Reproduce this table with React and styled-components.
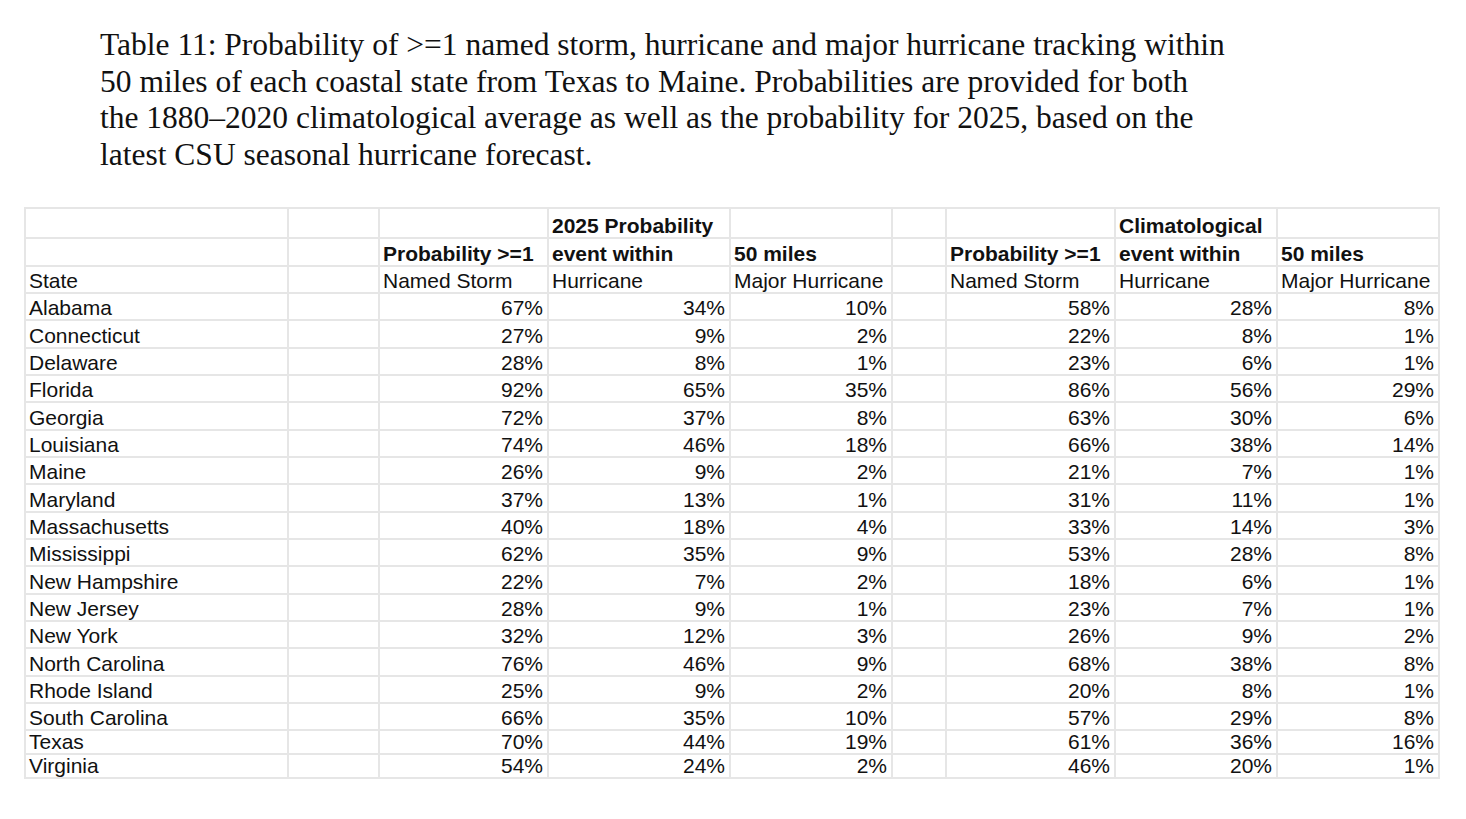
import React from 'react'
import styled, { createGlobalStyle } from 'styled-components'

const GlobalStyle = createGlobalStyle`
  html, body {
    margin: 0;
    padding: 0;
    background: #ffffff;
  }
`

const rows = [
  ['Alabama', '67%', '34%', '10%', '58%', '28%', '8%'],
  ['Connecticut', '27%', '9%', '2%', '22%', '8%', '1%'],
  ['Delaware', '28%', '8%', '1%', '23%', '6%', '1%'],
  ['Florida', '92%', '65%', '35%', '86%', '56%', '29%'],
  ['Georgia', '72%', '37%', '8%', '63%', '30%', '6%'],
  ['Louisiana', '74%', '46%', '18%', '66%', '38%', '14%'],
  ['Maine', '26%', '9%', '2%', '21%', '7%', '1%'],
  ['Maryland', '37%', '13%', '1%', '31%', '11%', '1%'],
  ['Massachusetts', '40%', '18%', '4%', '33%', '14%', '3%'],
  ['Mississippi', '62%', '35%', '9%', '53%', '28%', '8%'],
  ['New Hampshire', '22%', '7%', '2%', '18%', '6%', '1%'],
  ['New Jersey', '28%', '9%', '1%', '23%', '7%', '1%'],
  ['New York', '32%', '12%', '3%', '26%', '9%', '2%'],
  ['North Carolina', '76%', '46%', '9%', '68%', '38%', '8%'],
  ['Rhode Island', '25%', '9%', '2%', '20%', '8%', '1%'],
  ['South Carolina', '66%', '35%', '10%', '57%', '29%', '8%'],
  ['Texas', '70%', '44%', '19%', '61%', '36%', '16%'],
  ['Virginia', '54%', '24%', '2%', '46%', '20%', '1%'],
]

const colWidths = [263, 91, 169, 182, 162, 54, 169, 162, 162]

function App() {
  return (
    <Page>
      <GlobalStyle />
      <Caption>
        Table 11: Probability of &gt;=1 named storm, hurricane and major hurricane tracking within
        <br />
        50 miles of each coastal state from Texas to Maine. Probabilities are provided for both
        <br />
        the 1880–2020 climatological average as well as the probability for 2025, based on the
        <br />
        latest CSU seasonal hurricane forecast.
      </Caption>
      <Sheet>
        <colgroup>
          {colWidths.map((w, i) => (
            <col key={i} style={{ width: w }} />
          ))}
        </colgroup>
        <tbody>
          <Row $h={30}>
            <Cell />
            <Cell />
            <Cell />
            <Cell $bold>2025 Probability</Cell>
            <Cell />
            <Cell />
            <Cell />
            <Cell $bold>Climatological</Cell>
            <Cell />
          </Row>
          <Row $h={28}>
            <Cell />
            <Cell />
            <Cell $bold>Probability &gt;=1</Cell>
            <Cell $bold>event within</Cell>
            <Cell $bold>50 miles</Cell>
            <Cell />
            <Cell $bold>Probability &gt;=1</Cell>
            <Cell $bold>event within</Cell>
            <Cell $bold>50 miles</Cell>
          </Row>
          <Row $h={27}>
            <Cell>State</Cell>
            <Cell />
            <Cell>Named Storm</Cell>
            <Cell>Hurricane</Cell>
            <Cell>Major Hurricane</Cell>
            <Cell />
            <Cell>Named Storm</Cell>
            <Cell>Hurricane</Cell>
            <Cell>Major Hurricane</Cell>
          </Row>
          {rows.map((r, i) => (
            <Row key={r[0]} $h={i >= 16 ? 24 : 27.33}>
              <Cell>{r[0]}</Cell>
              <Cell />
              <Cell $num>{r[1]}</Cell>
              <Cell $num>{r[2]}</Cell>
              <Cell $num>{r[3]}</Cell>
              <Cell />
              <Cell $num>{r[4]}</Cell>
              <Cell $num>{r[5]}</Cell>
              <Cell $num>{r[6]}</Cell>
            </Row>
          ))}
        </tbody>
      </Sheet>
    </Page>
  )
}

export default App

const Page = styled.div`
  display: flex;
  flex-direction: column;
  align-items: flex-start;
  padding: 27px 0 0 24px;
  width: 1466px;
  height: 819px;
  box-sizing: border-box;
  overflow: hidden;
`

const Caption = styled.p`
  margin: 0 0 0 76px;
  font-family: "Liberation Serif", "Times New Roman", serif;
  font-size: 31.5px;
  line-height: 36.5px;
  color: #111111;
  white-space: nowrap;
`

const Sheet = styled.table`
  margin-top: 34px;
  border-collapse: collapse;
  table-layout: fixed;
  width: 1414px;
  font-family: "Liberation Sans", Arial, sans-serif;
  font-size: 21px;
  color: #111111;
`

const Row = styled.tr`
  height: ${p => p.$h}px;
`

const Cell = styled.td`
  border: 2px solid #e6e6e6;
  padding: 0 4px 0 3px;
  vertical-align: bottom;
  line-height: 22px;
  white-space: nowrap;
  overflow: hidden;
  font-weight: ${p => (p.$bold ? 700 : 400)};
  text-align: ${p => (p.$num ? 'right' : 'left')};
`
